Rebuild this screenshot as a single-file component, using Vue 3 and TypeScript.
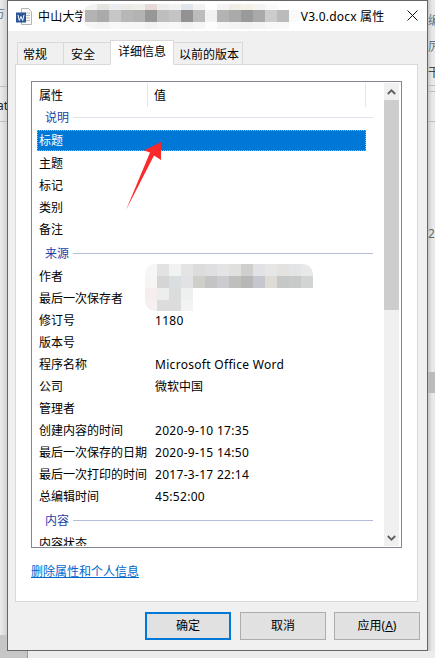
<script setup lang="ts">
interface Row { type: 'section' | 'row'; label: string; value?: string; selected?: boolean; faint?: boolean; mask?: boolean }

const rows: Row[] = [
  { type: 'section', label: '说明', faint: true },
  { type: 'row', label: '标题', selected: true },
  { type: 'row', label: '主题' },
  { type: 'row', label: '标记' },
  { type: 'row', label: '类别' },
  { type: 'row', label: '备注' },
  { type: 'section', label: '来源' },
  { type: 'row', label: '作者', mask: true },
  { type: 'row', label: '最后一次保存者' },
  { type: 'row', label: '修订号', value: '1180' },
  { type: 'row', label: '版本号' },
  { type: 'row', label: '程序名称', value: 'Microsoft Office Word' },
  { type: 'row', label: '公司', value: '微软中国' },
  { type: 'row', label: '管理者' },
  { type: 'row', label: '创建内容的时间', value: '2020-9-10 17:35' },
  { type: 'row', label: '最后一次保存的日期', value: '2020-9-15 14:50' },
  { type: 'row', label: '最后一次打印的时间', value: '2017-3-17 22:14' },
  { type: 'row', label: '总编辑时间', value: '45:52:00' },
  { type: 'section', label: '内容' },
  { type: 'row', label: '内容状态' },
]

const isLatin = (s?: string) => !!s && /^[\x00-\x7f]+$/.test(s)

const tabs = [
  { label: '常规', w: 47, pad: 5 },
  { label: '安全', w: 47, pad: 7 },
  { label: '详细信息', w: 64, pad: 7, active: true },
  { label: '以前的版本', w: 69, pad: 5 },
]

const titleCells = [
  ['#fdfdfd', '#f2f2f0', '#e2e4e0', '#e9edf1', '#ecebe8', '#f0eee9', '#e6d9d8', '#eeefed', '#f2f2f2', '#e1e6ec', '#f2f2f2', '#ffffff', '#f4f4f4', '#f0eee4', '#f4f2e6', '#f4f4f2', '#fafafa', '#fefefe', '#ffffff'],
  ['#f8f8f8', '#b3b3b3', '#aaaaaa', '#c6c6c6', '#b7b7b7', '#b3b3b3', '#979797', '#bebebe', '#c4c4c4', '#929292', '#bcbcbc', '#f2f2f2', '#b3b3b3', '#aaaaaa', '#9a9a9a', '#a9a9a9', '#cccccc', '#bbbbbb', '#fafafa'],
  ['#fdfdfd', '#f6f6f6', '#f4f4f4', '#f8f8f8', '#f6f6f6', '#f6f6f6', '#f2f2f2', '#f6f6f6', '#f8f8f8', '#f2f2f2', '#f6f6f6', '#fdfdfd', '#f6f6f6', '#f4f4f4', '#f2f2f2', '#f4f4f4', '#f8f8f8', '#f8f8f8', '#ffffff'],
]

const authorCells = [
  ['#f7f6f6', '#e2e2e2', '#f2f2f2', '#e4e4e4', '#dcdcdc', '#dfdfe1', '#e4e4e4', '#e0e0de', '#cfcfcd', '#e2e2e6', '#e6e6e6', '#e4e2e0', '#e2e4e6', '#e6e8ea'],
  ['#f7f4f4', '#d6d5d6', '#d9dfe1', '#e2e2e4', '#cfcfca', '#c4c4c4', '#cbcbd0', '#bfbfbd', '#b7b7b7', '#c6c6ce', '#dedad6', '#c6c8c8', '#c8caca', '#d2d4d4'],
  ['#f6eeee', '#eceeee', '#dcdcdc', '#eef0f0', '#fff', '#fff', '#fff', '#fff', '#fff', '#fff', '#fff', '#fff', '#fff', '#fff'],
  ['#f6f0f0', '#dcdcdc', '#dcdcdc', '#f2f4f4', '#fff', '#fff', '#fff', '#fff', '#fff', '#fff', '#fff', '#fff', '#fff', '#fff'],
]
</script>

<template>
  <div class="stage">
    <div class="strip strip-left">
      <span class="bg-glyph g-fang">方</span>
      <span class="bg-glyph g-at">at</span>
      <i class="bg-line l-86"></i>
      <i class="bg-line l-121"></i>
      <i class="bg-foot"></i>
    </div>

    <div class="dialog">
      <header class="titlebar">
        <svg class="doc-icon" width="16" height="17" viewBox="0 0 16 17">
          <path d="M5.5 .5h7l3 3v13h-10z" fill="#fbfbfb" stroke="#b4b4b4" />
          <path d="M7 5h7M7 7.500h7M7 10h7M7 12.500h7" stroke="#bcbcbc" />
          <rect x="0" y="4.500" width="10" height="10" fill="#2b5797" />
          <path d="M2 7l1.300 5.500L5 8.500l1.700 4L8 7" fill="none" stroke="#fff" stroke-width="1" />
        </svg>
        <span class="title-text">中山大学</span>
        <div class="title-mask">
          <template v-for="(line, i) in titleCells" :key="i">
            <i v-for="(c, j) in line" :key="j" :style="{ background: c }"></i>
          </template>
        </div>
        <span class="title-text">V3.0.docx 属性</span>
        <svg class="close" width="11" height="11" viewBox="0 0 11 11">
          <path d="M.5 .5l10 10M10.500 .5l-10 10" stroke="#111" stroke-width="1" fill="none" />
        </svg>
      </header>

      <div class="tabs">
        <div
          v-for="t in tabs"
          :key="t.label"
          class="tab"
          :class="{ active: t.active }"
          :style="{ width: t.w + 'px', paddingLeft: t.pad + 'px' }"
        >{{ t.label }}</div>
      </div>

      <section class="page">
        <div class="list">
          <div class="list-body">
            <div class="list-head">
              <span class="head-name">属性</span>
              <span class="head-value">值</span>
            </div>
            <template v-for="(r, i) in rows" :key="i">
              <div v-if="r.type === 'section'" class="section" :class="{ first: i === 0, faint: r.faint }">
                <span>{{ r.label }}</span><i></i>
              </div>
              <div v-else class="row" :class="{ selected: r.selected }">
                <span class="cell-name">{{ r.label }}</span>
                <span class="cell-value" :class="{ latin: isLatin(r.value) }">{{ r.value }}</span>
                <div v-if="r.mask" class="author-mask">
                  <template v-for="(line, a) in authorCells" :key="a">
                    <i v-for="(c, b) in line" :key="b" :style="{ background: c }"></i>
                  </template>
                </div>
              </div>
            </template>
          </div>
          <div class="scrollbar">
            <div class="arrow">
              <svg width="9" height="6" viewBox="0 0 9 6"><path d="M.8 5L4.500 1.300 8.200 5" fill="none" stroke="#606060" stroke-width="1.800" /></svg>
            </div>
            <div class="thumb"></div>
            <div class="track"></div>
            <div class="arrow">
              <svg width="9" height="6" viewBox="0 0 9 6"><path d="M.8 1L4.500 4.700 8.200 1" fill="none" stroke="#606060" stroke-width="1.800" /></svg>
            </div>
          </div>
        </div>
        <a class="link">删除属性和个人信息</a>
      </section>

      <footer class="footer">
        <button class="btn primary">确定</button>
        <button class="btn">取消</button>
        <button class="btn">应用(<u>A</u>)</button>
      </footer>
    </div>

    <div class="strip strip-right">
      <span class="bg-glyph g-r1">编</span>
      <span class="bg-glyph g-r2">厉</span>
      <span class="bg-glyph g-r3">干</span>
      <span class="bg-glyph g-r4">2</span>
      <i class="bg-line l-85"></i>
      <i class="bg-line l-91"></i>
      <i class="bg-line l-121"></i>
      <i class="bg-block"></i>
    </div>

    <svg class="pointer" width="40" height="72" viewBox="0 0 40 72">
      <path d="M36 1L19 9.500 25 11.500 1 69 29 14.500 36 19z" fill="#fb2a2a" />
    </svg>
  </div>
</template>

<style>
html, body { margin: 0; background: #e6e6e6; }
</style>

<style scoped>
.stage {
  position: relative;
  display: flex;
  align-items: flex-start;
  width: 435px;
  height: 658px;
  overflow: hidden;
  font-family: "Noto Sans", "Noto Sans CJK SC", sans-serif;
  font-size: 12px;
  line-height: 16px;
  color: #000;
  background: linear-gradient(90deg, #c6c6c6 0 27px, #9a9a9a 27px 28px, #ececec 28px);
}

.strip {
  position: relative;
  flex: none;
  height: 651px;
  overflow: hidden;
}
.strip-left { width: 7px; background: linear-gradient(90deg, #ececec, #d2d2d2); }
.strip-right { width: 7px; background: linear-gradient(90deg, #c8c8c8, #e8e8e8 60%); }

.bg-glyph { position: absolute; color: #555; white-space: nowrap; }
.g-fang { left: -7px; top: 6px; color: #5d7287; }
.g-at { left: -3px; top: 98px; color: #222; }
.g-r1 { left: 0; top: 13px; color: #59708a; }
.g-r2 { left: 0; top: 39px; color: #59708a; }
.g-r3 { left: 0; top: 65px; color: #444; }
.g-r4 { left: 0; top: 226px; color: #666; }
.bg-line { position: absolute; left: 0; right: 0; height: 1px; background: #bdbdbd; }
.l-85 { top: 85px; }
.l-86 { top: 86px; }
.l-91 { top: 91px; }
.l-121 { top: 121px; }
.bg-block { position: absolute; left: 0; right: 0; top: 372px; height: 21px; background: #bbb; }
.bg-foot { position: absolute; left: 0; right: 0; top: 635px; bottom: 0; background: #c6c6c6; }

.dialog {
  flex: none;
  box-sizing: border-box;
  display: flex;
  flex-direction: column;
  width: 421px;
  height: 651px;
  border: 1px solid #666;
  background: #f0f0f0;
}

.titlebar {
  display: flex;
  align-items: center;
  flex: none;
  height: 30px;
  padding-left: 8px;
  background: #fff;
  position: relative;
}
.doc-icon { flex: none; margin-right: 6px; }
.title-text { white-space: nowrap; color: #000; padding-top: 1px; letter-spacing: .2px; }
.title-mask {
  flex: none;
  display: grid;
  grid-template-columns: 3px repeat(17, 12px) 12px;
  grid-template-rows: 6px 12px 7px;
  width: 219px;
  height: 25px;
  margin: 0 0 0 -5px;
  border-radius: 12px;
  overflow: hidden;
}
.close { position: absolute; left: 399px; top: 9px; }

.tabs {
  display: flex;
  align-items: flex-end;
  flex: none;
  height: 34px;
  padding-left: 9px;
  margin-bottom: -1px;
  position: relative;
  z-index: 1;
}
.tab {
  box-sizing: border-box;
  height: 23px;
  padding-top: 4px;
  white-space: nowrap;
  background: #f0f0f0;
  border: 1px solid #d9d9d9;
  border-left-width: 0;
}
.tab:first-child { border-left-width: 1px; }
.tab.active {
  height: 25px;
  padding-top: 3px;
  background: #fff;
  border-left-width: 1px;
  border-bottom-color: #fff;
  margin-left: -1px;
}

.page {
  flex: none;
  box-sizing: border-box;
  width: 403px;
  height: 538px;
  margin-left: 7px;
  padding: 16px 15px 0;
  background: #fff;
  border: 1px solid #d9d9d9;
}

.list {
  box-sizing: border-box;
  display: flex;
  width: 371px;
  height: 467px;
  padding: 1px 2px 1px 0;
  border: 1px solid #828790;
  background: #fff;
}
.list-body {
  flex: 1;
  min-width: 0;
  overflow: hidden;
  padding-left: 5px;
}
.list-head {
  display: flex;
  align-items: center;
  box-sizing: border-box;
  width: 329px;
  height: 24px;
}
.head-name {
  box-sizing: border-box;
  width: 111px;
  padding-left: 2px;
  height: 24px;
  line-height: 25px;
  border-right: 1px solid #e5e5e5;
}
.head-value {
  flex: 1;
  height: 24px;
  line-height: 25px;
  padding-left: 6px;
  border-right: 1px solid #e5e5e5;
}

.section {
  display: flex;
  align-items: center;
  width: 328px;
  height: 20px;
  padding: 3px 0 2px 8px;
  color: #1c3fa8;
}
.section.first { padding: 0 0 3px 8px; }
.section span { padding-top: 2px; }
.section i {
  flex: 1;
  height: 1px;
  margin-left: 4px;
  background: #b4bdd8;
}
.section.faint i { background: #dfe3ee; }

.row {
  position: relative;
  display: flex;
  align-items: center;
  box-sizing: border-box;
  width: 329px;
  height: 22px;
  padding-left: 2px;
  padding-top: 1px;
}
.row.selected {
  height: 21px;
  margin-bottom: 1px;
  background: #0078d7;
  color: #fff;
  outline: 1px dotted #f4a13a;
  outline-offset: -1px;
}
.cell-name { flex: none; width: 116px; white-space: nowrap; }
.cell-value { white-space: nowrap; }
.cell-value.latin { letter-spacing: .3px; }
.author-mask {
  position: absolute;
  left: 108px;
  top: -1px;
  display: grid;
  grid-template-columns: repeat(14, 12px);
  grid-template-rows: repeat(4, 12px);
  width: 168px;
  height: 47px;
  border-radius: 10px;
  overflow: hidden;
}

.scrollbar {
  flex: none;
  display: flex;
  flex-direction: column;
  width: 15px;
  background: #f0f0f0;
}
.arrow {
  flex: none;
  display: flex;
  align-items: center;
  justify-content: center;
  height: 17px;
}
.thumb { flex: none; height: 210px; background: #cdcdcd; }
.track { flex: 1; }

.link {
  display: block;
  width: max-content;
  margin-top: 16px;
  color: #0066cc;
  text-decoration: underline;
}

.footer {
  display: flex;
  justify-content: flex-end;
  gap: 8px;
  flex: none;
  padding: 10px 7px 0 0;
}
.btn {
  box-sizing: border-box;
  width: 86px;
  height: 28px;
  padding: 0;
  font: inherit;
  color: #000;
  background: #e1e1e1;
  border: 1px solid #adadad;
  border-radius: 0;
}
.btn.primary { border: 2px solid #0078d7; margin-right: 1px; }

.pointer { position: absolute; left: 125px; top: 141px; }
</style>
